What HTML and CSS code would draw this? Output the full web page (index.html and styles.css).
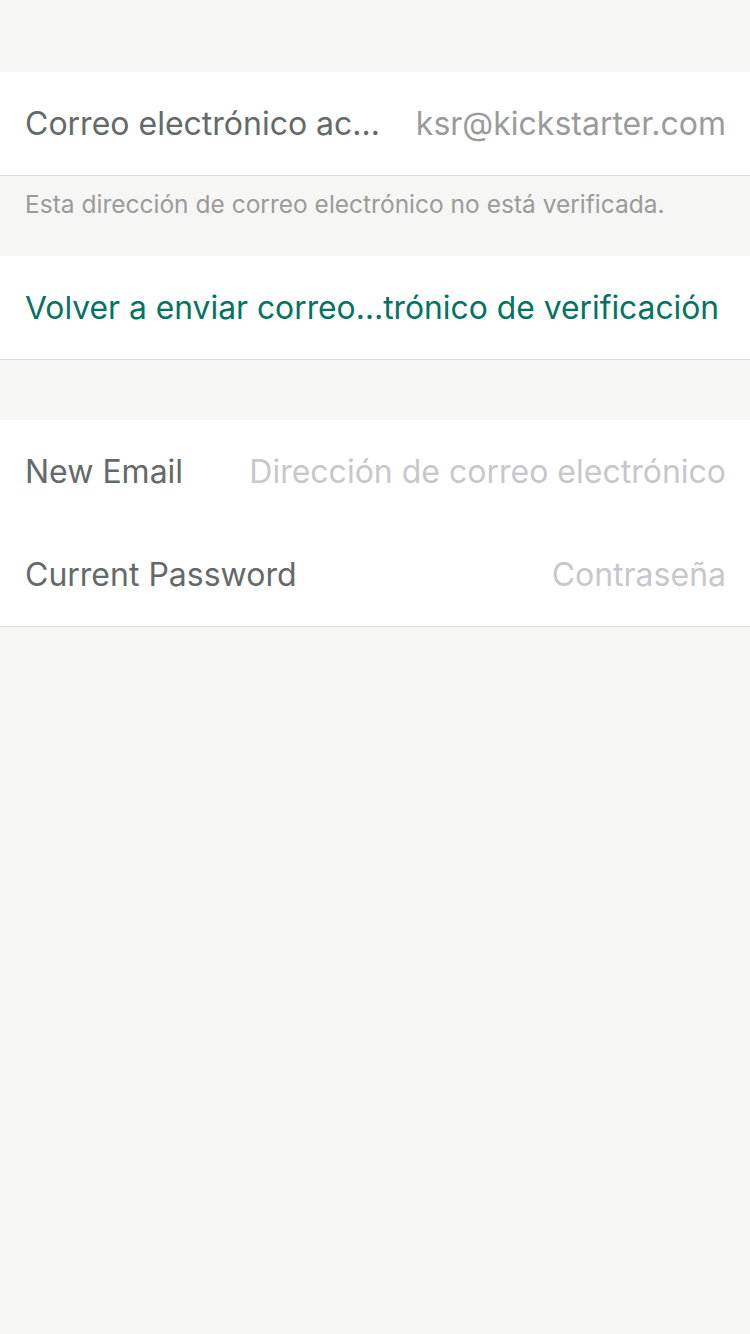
FILE: index.html
```html
<!DOCTYPE html>
<html lang="es">
<head>
<meta charset="utf-8">
<link rel="stylesheet" href="styles.css">
</head>
<body>
<div class="page">
  <section class="group group-first">
    <div class="row">
      <span class="label">Correo electrónico ac…</span>
      <span class="value">ksr@kickstarter.com</span>
    </div>
  </section>
  <p class="note">Esta dirección de correo electrónico no está verificada.</p>
  <section class="group">
    <div class="row">
      <span class="action">Volver a enviar correo…trónico de verificación</span>
    </div>
  </section>
  <section class="group group-spaced">
    <div class="row">
      <span class="label">New Email</span>
      <span class="placeholder">Dirección de correo electrónico</span>
    </div>
    <div class="row">
      <span class="label">Current Password</span>
      <span class="placeholder">Contraseña</span>
    </div>
  </section>
</div>
</body>
</html>
```

FILE: styles.css
```css
html, body {
  margin: 0;
  padding: 0;
  background: #f6f6f4;
}
body {
  font-family: Inter, Roboto, "Liberation Sans", sans-serif;
  width: 750px;
  height: 1334px;
}
.page {
  display: flex;
  flex-direction: column;
  padding-top: 72px;
}
.group {
  background: #ffffff;
  border-bottom: 1px solid #dcdcdc;
}
.group-spaced {
  margin-top: 60px;
}
.row {
  height: 103px;
  display: flex;
  align-items: center;
  justify-content: space-between;
  padding: 0 24px 0 25px;
}
.label {
  font-size: 32px;
  color: #656969;
  white-space: nowrap;
}
.value {
  font-size: 32px;
  color: #9b9b9b;
  white-space: nowrap;
}
.placeholder {
  font-size: 32px;
  color: #c7c7cc;
  white-space: nowrap;
}
.action {
  font-size: 31.8px;
  color: #037362;
  white-space: nowrap;
}
.note {
  margin: 0;
  height: 80px;
  box-sizing: border-box;
  padding: 13px 25px 0;
  font-size: 24.5px;
  color: #9b9b9b;
}
```
